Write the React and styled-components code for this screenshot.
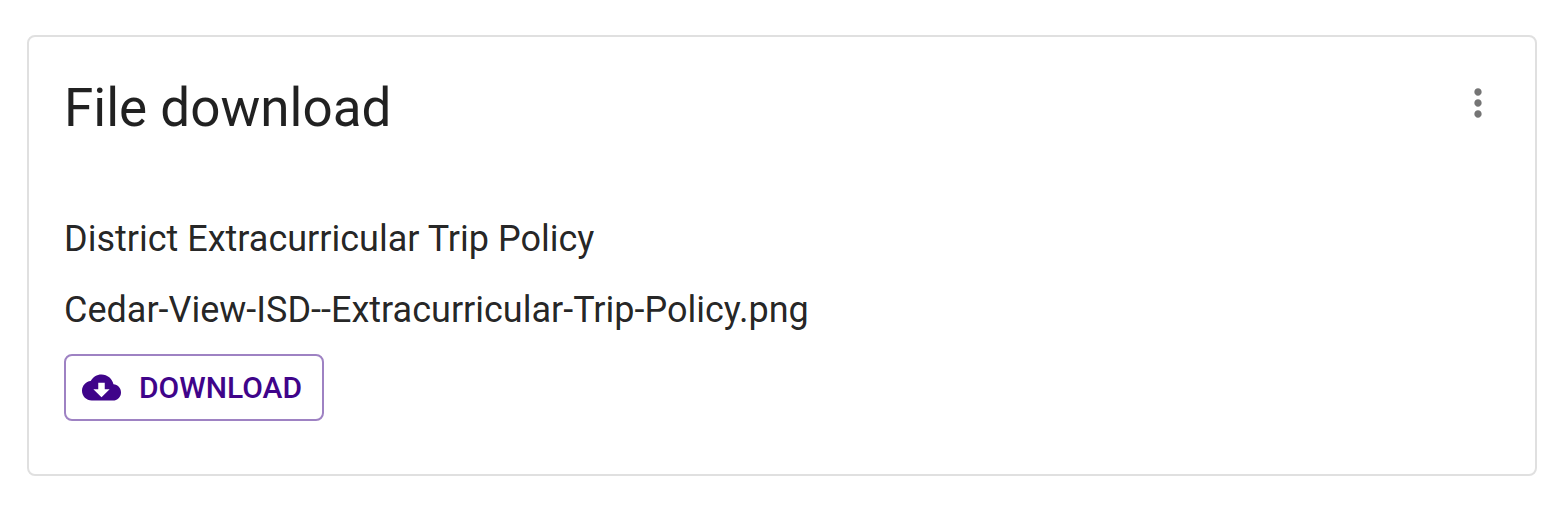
import React from 'react';
import styled, {createGlobalStyle} from 'styled-components';

const GlobalStyle = createGlobalStyle`
    body {
        margin: 0;
        background: #fff;
        color: rgba(0, 0, 0, 0.87);
        font-family: Roboto, 'Liberation Sans', sans-serif;
    }
`;
const Page = styled.main`
    padding: 35px 27px;
`;
const Card = styled.section`
    border: 2px solid #e0e0e0;
    border-radius: 8px;
    padding: 36px 35px 53px;
`;
const CardHeader = styled.header`
    display: flex;
    align-items: flex-start;
    justify-content: space-between;
    margin-bottom: 69px;
`;
const CardTitle = styled.h2`
    margin: 0;
    font-size: 53px;
    font-weight: 400;
    line-height: 70px;
`;
const MenuButton = styled.button`
    display: flex;
    padding: 8px 0;
    border: 0;
    background: none;
    color: #757575;
    cursor: pointer;
`;
const FileText = styled.p`
    margin: 0 0 17px;
    font-size: 36px;
    line-height: 54px;
`;
const DownloadButton = styled.button`
    display: flex;
    align-items: center;
    gap: 18px;
    padding: 8px 20px 8px 16px;
    border: 2px solid #9e82c3;
    border-radius: 8px;
    background: none;
    color: #3f048a;
    font: 500 30px/47px Roboto, 'Liberation Sans', sans-serif;
    text-transform: uppercase;
    cursor: pointer;
`;

const MoreIcon = () => (
    <svg width="44" height="44" viewBox="0 0 24 24" fill="currentColor" aria-hidden="true">
        <path d="M12 8c1.100 0 2-.9 2-2s-.9-2-2-2-2 .9-2 2 .9 2 2 2zm0 2c-1.100 0-2 .9-2 2s.9 2 2 2 2-.9 2-2-.9-2-2-2zm0 6c-1.100 0-2 .9-2 2s.9 2 2 2 2-.9 2-2-.9-2-2-2z" />
    </svg>
);

const CloudDownloadIcon = () => (
    <svg width="39" height="39" viewBox="0 0 24 24" fill="currentColor" aria-hidden="true">
        <path d="M19.350 10.040C18.670 6.590 15.640 4 12 4 9.110 4 6.600 5.640 5.350 8.040 2.340 8.360 0 10.910 0 14c0 3.310 2.690 6 6 6h13c2.760 0 5-2.240 5-5 0-2.640-2.050-4.780-4.650-4.960zM17 13l-5 5-5-5h3V9h4v4h3z" />
    </svg>
);

const App = () => (
    <>
        <GlobalStyle />
        <Page>
            <Card>
                <CardHeader>
                    <CardTitle>File download</CardTitle>
                    <MenuButton type="button" aria-label="More options">
                        <MoreIcon />
                    </MenuButton>
                </CardHeader>
                <FileText>District Extracurricular Trip Policy</FileText>
                <FileText>Cedar-View-ISD--Extracurricular-Trip-Policy.png</FileText>
                <DownloadButton type="button">
                    <CloudDownloadIcon />
                    Download
                </DownloadButton>
            </Card>
        </Page>
    </>
);

export default App;
